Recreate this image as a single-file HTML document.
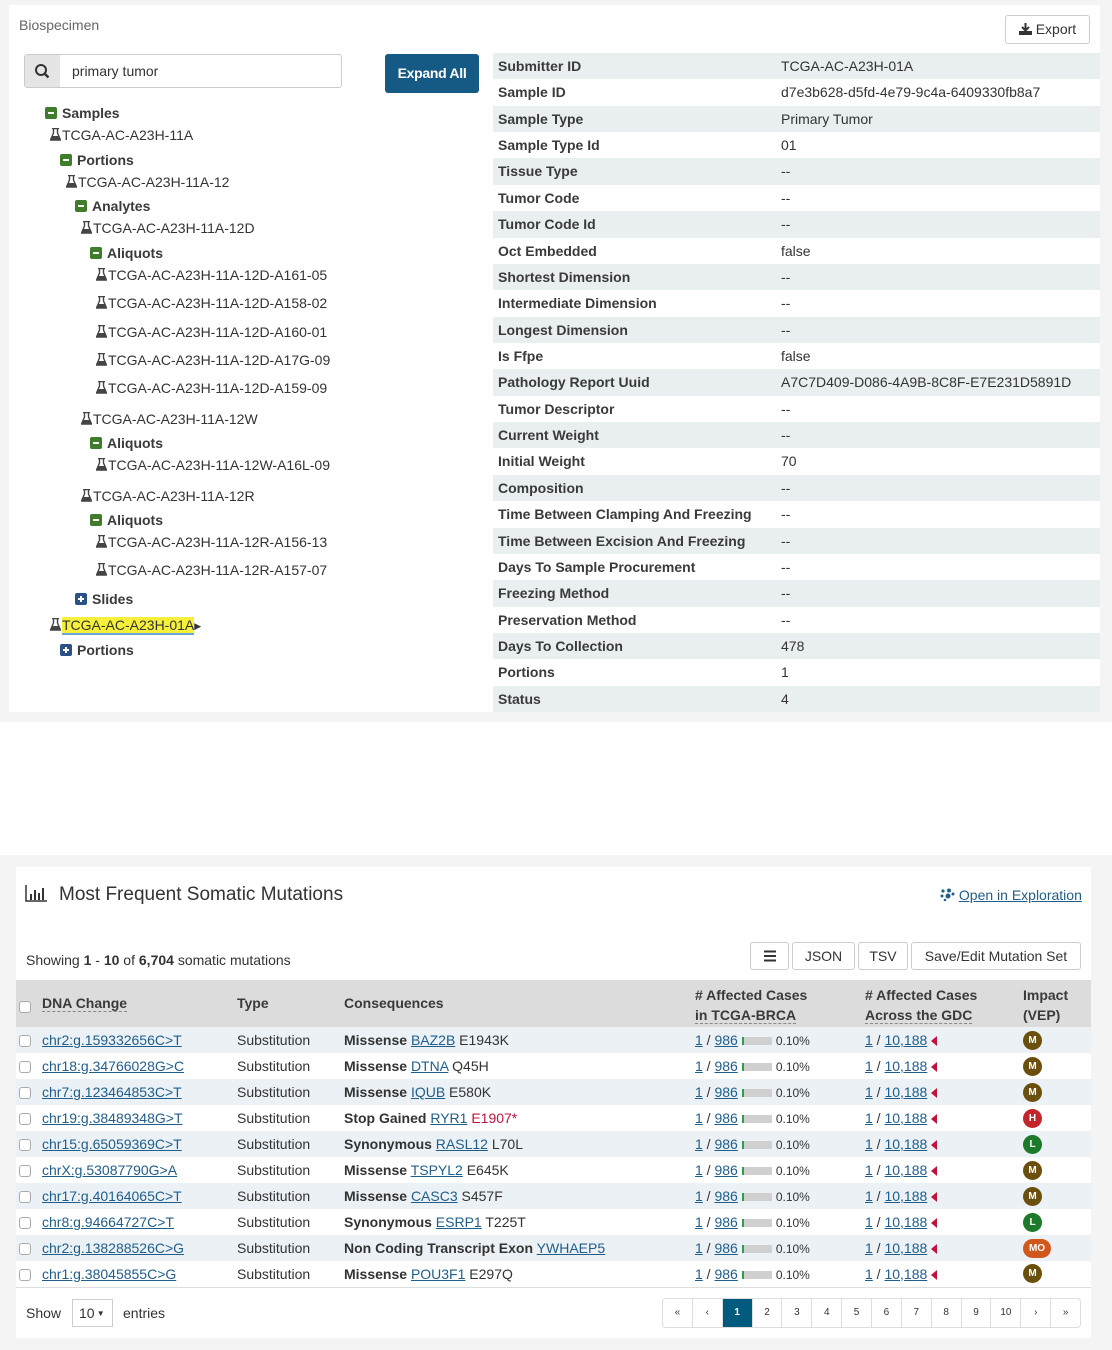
<!DOCTYPE html>
<html><head><meta charset="utf-8">
<style>
*{box-sizing:border-box;margin:0;padding:0}
body{width:1112px;height:1350px;background:#fff;font-family:"Liberation Sans",sans-serif;color:#333;position:relative;overflow:hidden;font-size:14px}
.abs{position:absolute}
.gray1{left:0;top:0;width:1112px;height:722px;background:#f4f4f4}
.p1{left:9px;top:5px;width:1091px;height:707px;background:#fff}
.gray2{left:0;top:855px;width:1112px;height:495px;background:#f4f4f4}
.p2{left:16px;top:867px;width:1075px;height:471px;background:#fff}
.t{position:absolute;white-space:nowrap;line-height:16px;font-size:14px;color:#333}
.b{font-weight:bold;color:#3a3a3a}
.ic{display:inline-block;width:12px;height:12px;border-radius:2px;vertical-align:-1px;margin-right:5px;position:relative}
.ic.m{background:#3f7d2a}.ic.p{background:#2a5286}
.ic::after{content:"";position:absolute;left:3px;top:5px;width:6px;height:2px;background:#fff}
.ic.p::before{content:"";position:absolute;left:5px;top:3px;width:2px;height:6px;background:#fff}
.fl{display:inline-block;width:11px;height:13px;vertical-align:-1px;margin-right:1px}
.kv{position:absolute;left:493px;width:607px;height:26.36px;font-size:14px;line-height:26px}
.kv.s{background:#e9eef1}
.kv span{position:absolute;left:5px;font-weight:bold;color:#3a3a3a}
.kv i{position:absolute;left:288px;font-style:normal;color:#333}
table{border-collapse:collapse;font-size:14px}
td{height:26px;white-space:nowrap;padding:0}
tr.s td{background:#ebf1f5}
a{color:#1f5e8c;text-decoration:underline}
.cb{display:inline-block;width:12px;height:12px;border:1px solid #aaa;border-radius:3px;background:#fff;vertical-align:-2px}
.bar{display:inline-block;width:30px;height:8px;background:#d0d0d0;border-left:2px solid #2e9e4a;vertical-align:0;margin:0 4px 0 4px}
.pct{font-size:12px}
.tri{display:inline-block;width:0;height:0;border-top:5px solid transparent;border-bottom:5px solid transparent;border-right:6px solid #c0143c;vertical-align:-1px;margin-left:4px}
.bd{display:inline-block;width:19px;height:19px;border-radius:10px;color:#fff;font-size:10px;font-weight:bold;text-align:center;line-height:19px;vertical-align:middle}
.M{background:#6b4f0c}.H{background:#c4242a}.L{background:#1d7a2a}.MO{background:#d1581d;width:28px}
.btn{position:absolute;top:942px;height:28px;border:1px solid #ccc;border-radius:3px;background:#fff;font-size:14px;line-height:26px;text-align:center;color:#333}
.pg{position:absolute;top:1298px;height:30px;border:1px solid #ddd;border-radius:4px;left:662px;width:419px;display:flex;overflow:hidden}
.pg div{flex:1;border-right:1px solid #ddd;font-size:10px;text-align:center;line-height:28px;color:#333}
.pg div:last-child{border-right:none}
.pg .on{background:#005b7f;color:#fff;font-weight:bold}
</style></head><body>
<svg width="0" height="0" style="position:absolute"><defs><symbol id="f" viewBox="0 0 11 13"><path d="M2 .5h7M3.5 1v4L.5 12h10L7.5 5V1" fill="none" stroke="#444" stroke-width="1.4"/><path d="M2 8h7l1.5 4H.5z" fill="#444"/></symbol></defs></svg>
<div class="abs gray1"></div>
<div class="abs p1"></div>
<div class="t" style="left:19px;top:17px;color:#666">Biospecimen</div>
<div class="abs" style="left:24px;top:54px;width:318px;height:34px;border:1px solid #ccc;border-radius:3px;background:#fff"></div>
<div class="abs" style="left:25px;top:55px;width:35px;height:32px;background:#e5e5e5"><svg width="35" height="32"><circle cx="16" cy="15" r="5" fill="none" stroke="#333" stroke-width="2"/><path d="M19.5 18.5l4 4" stroke="#333" stroke-width="2.4"/></svg></div>
<div class="t" style="left:72px;top:63px">primary tumor</div>
<div class="abs" style="left:385px;top:54px;width:94px;height:39px;background:#155a85;border-radius:3px;color:#fff;font-size:14px;font-weight:bold;line-height:39px;text-align:center;letter-spacing:-.3px">Expand All</div>
<div class="abs" style="left:1005px;top:15px;width:85px;height:29px;border:1px solid #ccc;border-radius:3px;font-size:14px;line-height:27px;text-align:center">
<svg width="13" height="12" style="vertical-align:-1px"><path d="M6.5 0v7M3 4l3.5 3.5L10 4" stroke="#333" stroke-width="2" fill="none"/><path d="M0 8h13v4H0z" fill="#333"/></svg> Export</div>

<div class="t b" style="left:45px;top:105px"><span class="ic m"></span>Samples</div>
<div class="t" style="left:50px;top:127px"><svg class="fl"><use href="#f"/></svg>TCGA-AC-A23H-11A</div>
<div class="t b" style="left:60px;top:152px"><span class="ic m"></span>Portions</div>
<div class="t" style="left:66px;top:174px"><svg class="fl"><use href="#f"/></svg>TCGA-AC-A23H-11A-12</div>
<div class="t b" style="left:75px;top:198px"><span class="ic m"></span>Analytes</div>
<div class="t" style="left:81px;top:220px"><svg class="fl"><use href="#f"/></svg>TCGA-AC-A23H-11A-12D</div>
<div class="t b" style="left:90px;top:245px"><span class="ic m"></span>Aliquots</div>
<div class="t" style="left:96px;top:267px"><svg class="fl"><use href="#f"/></svg>TCGA-AC-A23H-11A-12D-A161-05</div>
<div class="t" style="left:96px;top:295px"><svg class="fl"><use href="#f"/></svg>TCGA-AC-A23H-11A-12D-A158-02</div>
<div class="t" style="left:96px;top:324px"><svg class="fl"><use href="#f"/></svg>TCGA-AC-A23H-11A-12D-A160-01</div>
<div class="t" style="left:96px;top:352px"><svg class="fl"><use href="#f"/></svg>TCGA-AC-A23H-11A-12D-A17G-09</div>
<div class="t" style="left:96px;top:380px"><svg class="fl"><use href="#f"/></svg>TCGA-AC-A23H-11A-12D-A159-09</div>
<div class="t" style="left:81px;top:411px"><svg class="fl"><use href="#f"/></svg>TCGA-AC-A23H-11A-12W</div>
<div class="t b" style="left:90px;top:435px"><span class="ic m"></span>Aliquots</div>
<div class="t" style="left:96px;top:457px"><svg class="fl"><use href="#f"/></svg>TCGA-AC-A23H-11A-12W-A16L-09</div>
<div class="t" style="left:81px;top:488px"><svg class="fl"><use href="#f"/></svg>TCGA-AC-A23H-11A-12R</div>
<div class="t b" style="left:90px;top:512px"><span class="ic m"></span>Aliquots</div>
<div class="t" style="left:96px;top:534px"><svg class="fl"><use href="#f"/></svg>TCGA-AC-A23H-11A-12R-A156-13</div>
<div class="t" style="left:96px;top:562px"><svg class="fl"><use href="#f"/></svg>TCGA-AC-A23H-11A-12R-A157-07</div>
<div class="t b" style="left:75px;top:591px"><span class="ic p"></span>Slides</div>
<div class="t" style="left:50px;top:617px"><svg class="fl"><use href="#f"/></svg><span style="background:#f7f03a;border-bottom:2px solid #6aa5d6">TCGA-AC-A23H-01A</span><span style="font-size:9px;vertical-align:1px">&#9654;</span></div>
<div class="t b" style="left:60px;top:642px"><span class="ic p"></span>Portions</div>

<div class="kv s" style="top:53px"><span>Submitter ID</span><i>TCGA-AC-A23H-01A</i></div>
<div class="kv" style="top:79.4px"><span>Sample ID</span><i>d7e3b628-d5fd-4e79-9c4a-6409330fb8a7</i></div>
<div class="kv s" style="top:105.7px"><span>Sample Type</span><i>Primary Tumor</i></div>
<div class="kv" style="top:132.1px"><span>Sample Type Id</span><i>01</i></div>
<div class="kv s" style="top:158.4px"><span>Tissue Type</span><i>--</i></div>
<div class="kv" style="top:184.8px"><span>Tumor Code</span><i>--</i></div>
<div class="kv s" style="top:211.2px"><span>Tumor Code Id</span><i>--</i></div>
<div class="kv" style="top:237.5px"><span>Oct Embedded</span><i>false</i></div>
<div class="kv s" style="top:263.9px"><span>Shortest Dimension</span><i>--</i></div>
<div class="kv" style="top:290.2px"><span>Intermediate Dimension</span><i>--</i></div>
<div class="kv s" style="top:316.6px"><span>Longest Dimension</span><i>--</i></div>
<div class="kv" style="top:343px"><span>Is Ffpe</span><i>false</i></div>
<div class="kv s" style="top:369.3px"><span>Pathology Report Uuid</span><i>A7C7D409-D086-4A9B-8C8F-E7E231D5891D</i></div>
<div class="kv" style="top:395.7px"><span>Tumor Descriptor</span><i>--</i></div>
<div class="kv s" style="top:422px"><span>Current Weight</span><i>--</i></div>
<div class="kv" style="top:448.4px"><span>Initial Weight</span><i>70</i></div>
<div class="kv s" style="top:474.8px"><span>Composition</span><i>--</i></div>
<div class="kv" style="top:501.1px"><span>Time Between Clamping And Freezing</span><i>--</i></div>
<div class="kv s" style="top:527.5px"><span>Time Between Excision And Freezing</span><i>--</i></div>
<div class="kv" style="top:553.8px"><span>Days To Sample Procurement</span><i>--</i></div>
<div class="kv s" style="top:580.2px"><span>Freezing Method</span><i>--</i></div>
<div class="kv" style="top:606.6px"><span>Preservation Method</span><i>--</i></div>
<div class="kv s" style="top:632.9px"><span>Days To Collection</span><i>478</i></div>
<div class="kv" style="top:659.3px"><span>Portions</span><i>1</i></div>
<div class="kv s" style="top:685.6px;height:26.4px"><span>Status</span><i>4</i></div>

<div class="abs gray2"></div>
<div class="abs p2"></div>
<svg class="abs" style="left:25px;top:885px" width="23" height="17"><path d="M1 0v16h21" stroke="#333" stroke-width="1.5" fill="none"/><path d="M5 9h2v6H5zM9 5h2v10H9zM13 8h2v7h-2zM17 3h2v12h-2z" fill="#333"/></svg>
<div class="t" style="left:59px;top:884px;font-size:19px;line-height:22px">Most Frequent Somatic Mutations</div>
<div class="t" style="left:940px;top:887px"><svg width="15" height="13" style="vertical-align:-1px"><g fill="#1f5e8c"><circle cx="3" cy="3" r="1.6"/><circle cx="9" cy="2.5" r="2"/><circle cx="2" cy="8" r="1.5"/><circle cx="8" cy="8" r="2.5"/><circle cx="13" cy="6" r="1.5"/><circle cx="5" cy="12" r="1.3"/></g></svg> <a>Open in Exploration</a></div>
<div class="t" style="left:26px;top:952px">Showing <b>1</b> - <b>10</b> of <b>6,704</b> somatic mutations</div>
<div class="btn" style="left:750px;width:39px"><svg width="14" height="12" style="vertical-align:-1px"><path d="M1 1.5h12M1 6h12M1 10.5h12" stroke="#333" stroke-width="2"/></svg></div>
<div class="btn" style="left:792px;width:63px">JSON</div>
<div class="btn" style="left:858px;width:50px">TSV</div>
<div class="btn" style="left:911px;width:170px">Save/Edit Mutation Set</div>

<div class="abs" style="left:16px;top:980px;width:1075px;height:47px;background:#dcdcdc"></div>
<div class="abs" style="left:19px;top:998px"><span class="cb"></span></div>
<div class="t b" style="left:42px;top:995px;border-bottom:1px dashed #888">DNA Change</div>
<div class="t b" style="left:237px;top:995px">Type</div>
<div class="t b" style="left:344px;top:995px">Consequences</div>
<div class="t b" style="left:695px;top:985px;line-height:20px"># Affected Cases<br><span style="border-bottom:1px dashed #888">in TCGA-BRCA</span></div>
<div class="t b" style="left:865px;top:985px;line-height:20px"># Affected Cases<br><span style="border-bottom:1px dashed #888">Across the GDC</span></div>
<div class="t b" style="left:1023px;top:985px;line-height:20px">Impact<br>(VEP)</div>

<table class="abs" style="left:16px;top:1027px;width:1075px;border-bottom:1px solid #ddd">
<colgroup><col style="width:26px"><col style="width:195px"><col style="width:107px"><col style="width:351px"><col style="width:170px"><col style="width:158px"><col></colgroup>
<tr class="s"><td style="padding-left:3px"><span class="cb"></span></td><td><a>chr2:g.159332656C&gt;T</a></td><td>Substitution</td><td><b>Missense</b> <a>BAZ2B</a> E1943K</td><td><a>1</a> / <a>986</a><span class="bar"></span><span class="pct">0.10%</span></td><td><a>1</a> / <a>10,188</a><span class="tri"></span></td><td><span class="bd M">M</span></td></tr>
<tr><td style="padding-left:3px"><span class="cb"></span></td><td><a>chr18:g.34766028G&gt;C</a></td><td>Substitution</td><td><b>Missense</b> <a>DTNA</a> Q45H</td><td><a>1</a> / <a>986</a><span class="bar"></span><span class="pct">0.10%</span></td><td><a>1</a> / <a>10,188</a><span class="tri"></span></td><td><span class="bd M">M</span></td></tr>
<tr class="s"><td style="padding-left:3px"><span class="cb"></span></td><td><a>chr7:g.123464853C&gt;T</a></td><td>Substitution</td><td><b>Missense</b> <a>IQUB</a> E580K</td><td><a>1</a> / <a>986</a><span class="bar"></span><span class="pct">0.10%</span></td><td><a>1</a> / <a>10,188</a><span class="tri"></span></td><td><span class="bd M">M</span></td></tr>
<tr><td style="padding-left:3px"><span class="cb"></span></td><td><a>chr19:g.38489348G&gt;T</a></td><td>Substitution</td><td><b>Stop Gained</b> <a>RYR1</a> <span style="color:#c0143c">E1907*</span></td><td><a>1</a> / <a>986</a><span class="bar"></span><span class="pct">0.10%</span></td><td><a>1</a> / <a>10,188</a><span class="tri"></span></td><td><span class="bd H">H</span></td></tr>
<tr class="s"><td style="padding-left:3px"><span class="cb"></span></td><td><a>chr15:g.65059369C&gt;T</a></td><td>Substitution</td><td><b>Synonymous</b> <a>RASL12</a> L70L</td><td><a>1</a> / <a>986</a><span class="bar"></span><span class="pct">0.10%</span></td><td><a>1</a> / <a>10,188</a><span class="tri"></span></td><td><span class="bd L">L</span></td></tr>
<tr><td style="padding-left:3px"><span class="cb"></span></td><td><a>chrX:g.53087790G&gt;A</a></td><td>Substitution</td><td><b>Missense</b> <a>TSPYL2</a> E645K</td><td><a>1</a> / <a>986</a><span class="bar"></span><span class="pct">0.10%</span></td><td><a>1</a> / <a>10,188</a><span class="tri"></span></td><td><span class="bd M">M</span></td></tr>
<tr class="s"><td style="padding-left:3px"><span class="cb"></span></td><td><a>chr17:g.40164065C&gt;T</a></td><td>Substitution</td><td><b>Missense</b> <a>CASC3</a> S457F</td><td><a>1</a> / <a>986</a><span class="bar"></span><span class="pct">0.10%</span></td><td><a>1</a> / <a>10,188</a><span class="tri"></span></td><td><span class="bd M">M</span></td></tr>
<tr><td style="padding-left:3px"><span class="cb"></span></td><td><a>chr8:g.94664727C&gt;T</a></td><td>Substitution</td><td><b>Synonymous</b> <a>ESRP1</a> T225T</td><td><a>1</a> / <a>986</a><span class="bar"></span><span class="pct">0.10%</span></td><td><a>1</a> / <a>10,188</a><span class="tri"></span></td><td><span class="bd L">L</span></td></tr>
<tr class="s"><td style="padding-left:3px"><span class="cb"></span></td><td><a>chr2:g.138288526C&gt;G</a></td><td>Substitution</td><td><b>Non Coding Transcript Exon</b> <a>YWHAEP5</a></td><td><a>1</a> / <a>986</a><span class="bar"></span><span class="pct">0.10%</span></td><td><a>1</a> / <a>10,188</a><span class="tri"></span></td><td><span class="bd MO">MO</span></td></tr>
<tr><td style="padding-left:3px"><span class="cb"></span></td><td><a>chr1:g.38045855C&gt;G</a></td><td>Substitution</td><td><b>Missense</b> <a>POU3F1</a> E297Q</td><td><a>1</a> / <a>986</a><span class="bar"></span><span class="pct">0.10%</span></td><td><a>1</a> / <a>10,188</a><span class="tri"></span></td><td><span class="bd M">M</span></td></tr>
</table>

<div class="t" style="left:26px;top:1305px">Show</div>
<div class="abs" style="left:72px;top:1299px;width:41px;height:28px;border:1px solid #ccc;font-size:14px;line-height:26px;padding-left:6px">10<span style="font-size:8px;vertical-align:2px"> &#9660;</span></div>
<div class="t" style="left:123px;top:1305px">entries</div>
<div class="pg"><div>«</div><div>‹</div><div class="on">1</div><div>2</div><div>3</div><div>4</div><div>5</div><div>6</div><div>7</div><div>8</div><div>9</div><div>10</div><div>›</div><div>»</div></div>
</body></html>
